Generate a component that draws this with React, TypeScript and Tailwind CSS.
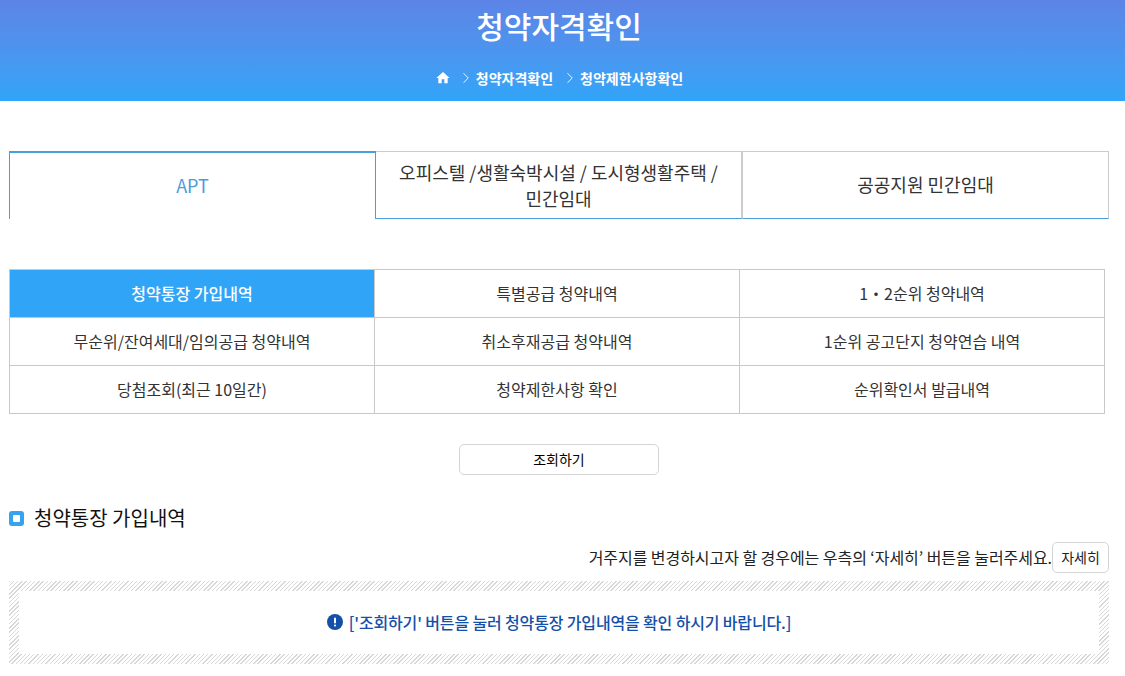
import { ChevronRight } from "lucide-react";

const cells = [
  "청약통장 가입내역",
  "특별공급 청약내역",
  "1・2순위 청약내역",
  "무순위/잔여세대/임의공급 청약내역",
  "취소후재공급 청약내역",
  "1순위 공고단지 청약연습 내역",
  "당첨조회(최근 10일간)",
  "청약제한사항 확인",
  "순위확인서 발급내역",
];

export default function App() {
  return (
    <div className="w-full h-[676px] overflow-hidden bg-white font-['Noto_Sans_CJK_KR',sans-serif] text-[#333]">
      {/* Header */}
      <div className="h-[101px] pr-[7px] bg-gradient-to-b from-[#5c84e6] to-[#30a5f8] flex flex-col items-center text-white">
        <h1 className="mt-[4px] h-[42px] text-[30px] leading-[42px] font-medium">청약자격확인</h1>
        <div className="mt-[22px] flex items-center text-[14px] leading-5 font-bold">
          <svg width="16" height="16" viewBox="0 0 24 24" fill="white">
            <path d="M10 20v-6h4v6h5v-8h3L12 3 2 12h3v8z" />
          </svg>
          <ChevronRight size={18} strokeWidth={1.2} className="ml-[6px] mr-[1px]" />
          <span>청약자격확인</span>
          <ChevronRight size={18} strokeWidth={1.2} className="ml-[8px] mr-[1px]" />
          <span>청약제한사항확인</span>
        </div>
      </div>

      <div className="w-[1118px] px-[9px]">
        {/* Tabs */}
        <div className="mt-[50px] flex h-[68px] text-[18px] leading-[26px]">
          <div className="w-[367px] pb-[2px] border-t-2 border-l border-r border-[#4a9fd8] flex items-center justify-center text-[#4a9be0]">
            APT
          </div>
          <div className="w-[367px] pb-[1px] border-t border-r-2 border-b border-t-[#ccc] border-r-[#ccc] border-b-[#4a9fd8] flex items-center justify-center text-center px-[20px]">
            오피스텔 /생활숙박시설 / 도시형생활주택 / 민간임대
          </div>
          <div className="flex-1 pb-[2px] border-t border-r border-b border-t-[#ccc] border-r-[#ccc] border-b-[#4a9fd8] flex items-center justify-center">
            공공지원 민간임대
          </div>
        </div>

        {/* Category grid */}
        <div className="mt-[50px] w-[1096px] grid grid-cols-3 border-t border-l border-[#c8c8c8] text-[16px]">
          {cells.map((c, i) => (
            <div
              key={c}
              className={
                i === 0
                  ? "h-[48px] pb-[2px] border-r border-b border-[#c8c8c8] bg-[#30a5f8] text-white font-medium flex items-center justify-center"
                  : "h-[48px] pb-[2px] border-r border-b border-[#c8c8c8] flex items-center justify-center"
              }
            >
              {c}
            </div>
          ))}
        </div>

        <div className="mt-[30px] flex justify-center">
          <button className="w-[200px] h-[31px] pb-[1px] border border-[#d5d5d5] rounded-[5px] bg-white text-[14px] text-black">
            조회하기
          </button>
        </div>

        {/* Section title */}
        <div className="mt-[28px] flex items-center h-[30px]">
          <span className="w-[15px] h-[15px] rounded-[3px] bg-[#35a3ee] flex items-center justify-center">
            <span className="w-[7px] h-[7px] rounded-[1px] bg-white" />
          </span>
          <h2 className="ml-[10px] text-[20px] text-[#111]">청약통장 가입내역</h2>
        </div>

        <div className="mt-[9px] flex items-center justify-end h-[31px] text-[16px] text-[#222]">
          <span className="pb-[2px] tracking-[-0.05px]">거주지를 변경하시고자 할 경우에는 우측의 ‘자세히’ 버튼을 눌러주세요.</span>
          <button className="w-[57px] h-[31px] pb-[1px] border border-[#d5d5d5] rounded-[5px] bg-white text-[14px] text-[#222]">
            자세히
          </button>
        </div>

        {/* Notice */}
        <div className="mt-[8px] h-[83px] p-[10px] bg-[repeating-linear-gradient(135deg,#d8d8d8_0,#d8d8d8_1px,#ffffff_1px,#ffffff_3px)]">
          <div className="h-full pb-[2px] bg-white flex items-center justify-center text-[16px] tracking-[-0.15px] font-medium text-[#1450a8]">
            <svg width="16" height="16" viewBox="0 0 16 16" className="mr-[6px]">
              <circle cx="8" cy="8" r="8" fill="#1450a8" />
              <rect x="7" y="3.5" width="2" height="6" rx="1" fill="#fff" />
              <circle cx="8" cy="11.5" r="1.1" fill="#fff" />
            </svg>
            ['조회하기' 버튼을 눌러 청약통장 가입내역을 확인 하시기 바랍니다.]
          </div>
        </div>
      </div>
    </div>
  );
}
